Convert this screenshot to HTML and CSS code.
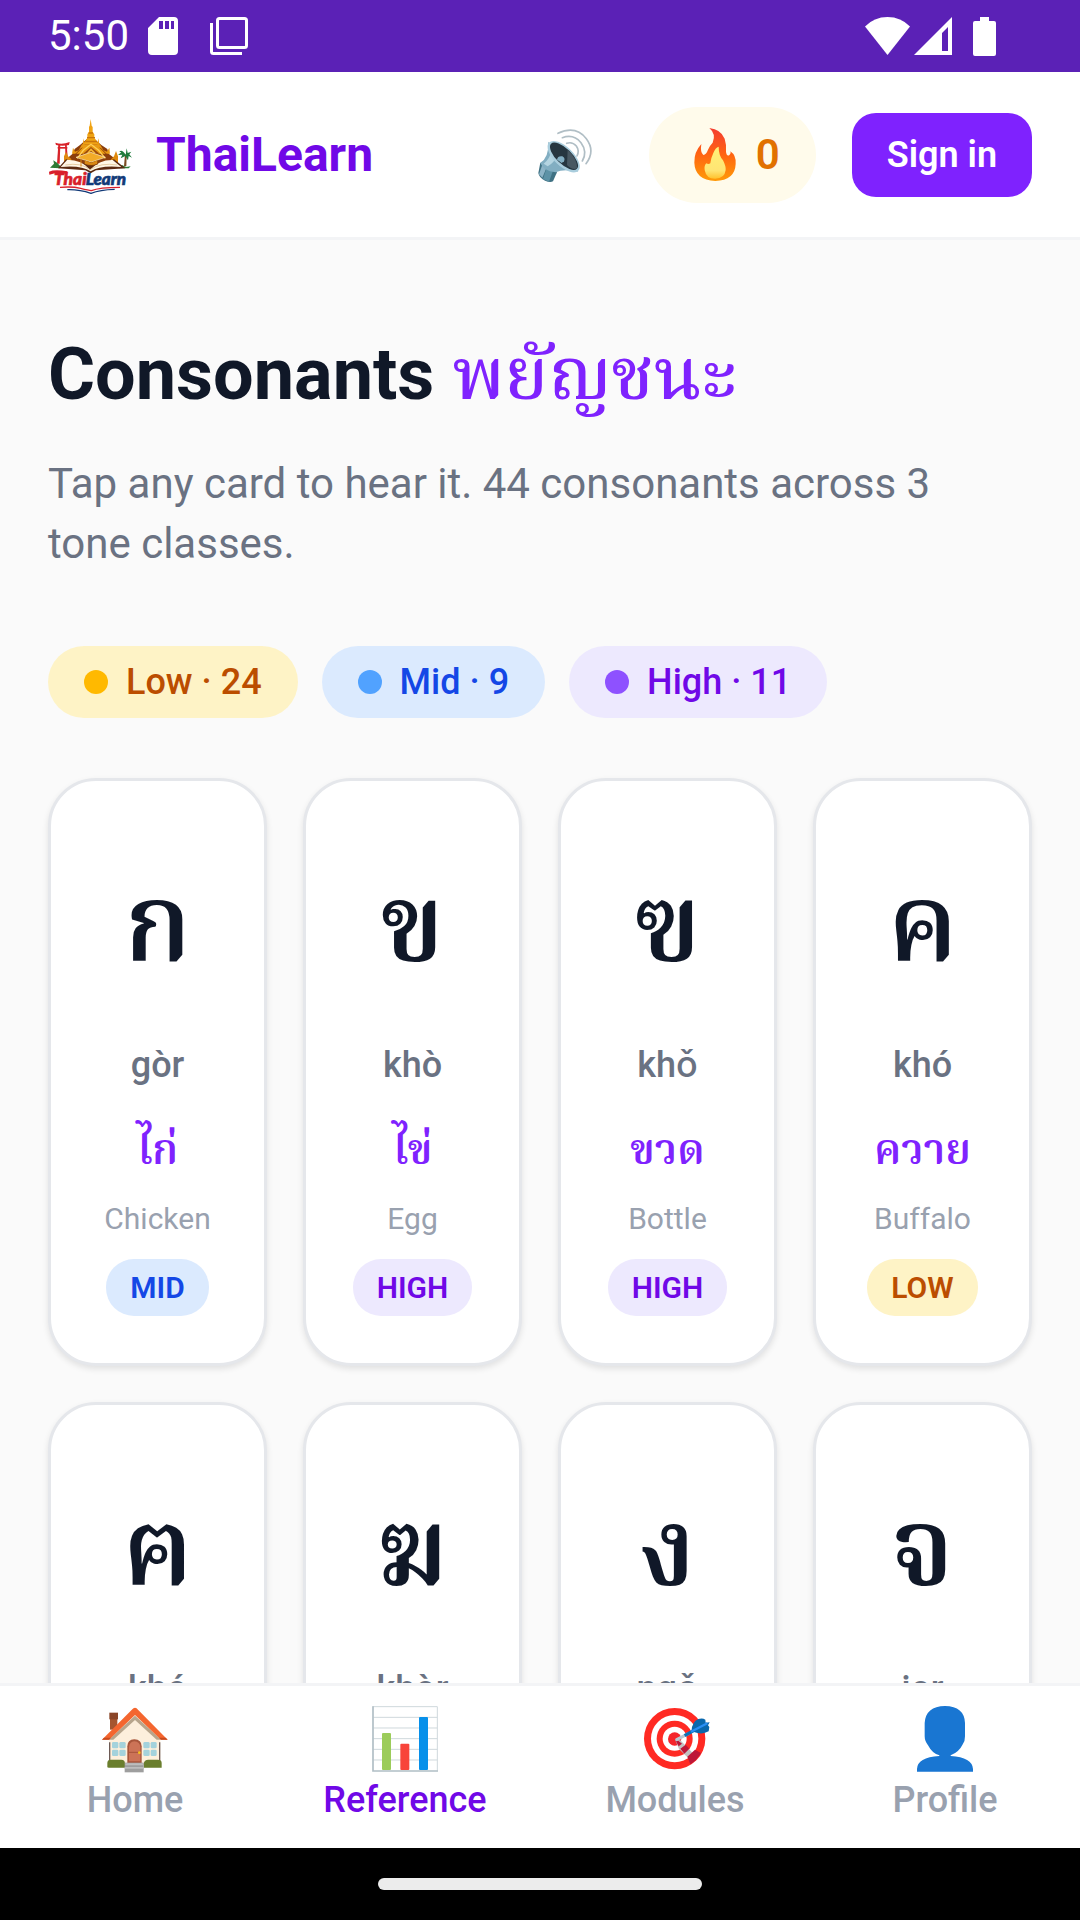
FILE: index.html
```html
<!DOCTYPE html>
<html lang="en">

<head>
  <meta charset="UTF-8">
  <meta name="viewport" content="width=device-width, initial-scale=1.0">
  <title>ThaiLearn - Consonants</title>
  <link rel="stylesheet" href="styles.css">
</head>

<body>
  <div class="status-bar">
    <span class="time">5:50</span>
    <svg class="sd-icon" viewBox="0 0 30 38" width="30" height="38">
      <path fill="#fff" fill-rule="evenodd" d="M11 0H26a4 4 0 0 1 4 4V34a4 4 0 0 1-4 4H4a4 4 0 0 1-4-4V11ZM11 4V12h4V4ZM17 4V12h4V4ZM23 4V12h3V4Z" />
    </svg>
    <svg class="layers-icon" viewBox="0 0 38 38" width="38" height="38" fill="none" stroke="#fff" stroke-width="3">
      <rect x="7.500" y="1.500" width="29" height="29" rx="2" />
      <path d="M1.500 6V34.500a2 2 0 0 0 2 2H32" />
    </svg>
    <div class="status-right">
      <svg viewBox="0 0 45 38" width="45" height="38">
        <path fill="#fff" d="M0 9.500Q9 0 22.500 0T45 9.500L22.500 38Z" />
      </svg>
      <svg viewBox="0 0 38 38" width="38" height="38">
        <path fill="#fff" fill-rule="evenodd" d="M38 0V38H0ZM34 10L28 16V34H34Z" />
      </svg>
      <svg class="battery" viewBox="0 0 23 39" width="23" height="39">
        <path fill="#fff" d="M7 0H16V4H21a2 2 0 0 1 2 2V37a2 2 0 0 1-2 2H2a2 2 0 0 1-2-2V6a2 2 0 0 1 2-2H7Z" />
      </svg>
    </div>
  </div>

  <header class="header">
    <a class="brand" href="#">
      <svg class="logo" viewBox="24 24 252 252">
        <!-- swing gate -->
        <g fill="#d8232a">
          <path d="M46 113Q66 120 89 111L87 120Q67 125 48 120Z" />
          <path d="M53 126H82V131H53Z" />
          <path d="M55 118H61L59 176H51Z" />
          <path d="M75 118H80L84 168H77Z" />
        </g>
        <!-- temple -->
        <path fill="#8b3e0c" d="M82 160L98 146 104 132 120 120 152 92 184 120 202 132 206 146 226 162 220 186H84Z" />
        <path fill="#f0a313" d="M152 42L155 62 158 66 158 80 163 88 163 98 170 108 176 118H128L136 108 142 98 142 88 147 80 147 66 149 62Z" />
        <path fill="#c8740a" d="M146 82H159V86H146ZM141 96H165V100H141ZM136 107H171V112H136Z" />
        <path fill="#e99a12" d="M128 124L130 100 134 122ZM171 122L175 100 179 124ZM96 146L99 128 105 140 116 136 126 118H180L190 136 201 140 208 128 210 146Z" />
        <path fill="none" stroke="#8b3e0c" stroke-width="3" d="M106 148L126 128M200 148L180 128" />
        <path fill="none" stroke="#ffd057" stroke-width="4" d="M112 160L130 136 153 118 176 136 196 160" />
        <path fill="#9c4b0c" d="M132 144L153 126 176 144V158H132Z" />
        <path fill="#f7b733" d="M141 144L153 130 167 144H161L153 137 146 144Z" />
        <path fill="#e08a0e" d="M72 176V154L78 140 84 154 94 162V180H72ZM212 164L222 154 228 138 234 154V180H212Z" />
        <!-- palm and bushes -->
        <path fill="#2d7a35" d="M30 188L42 176 40 166 52 174 60 182V190ZM236 190L246 180 258 186 272 184 266 190Z" />
        <path fill="#7a4b20" d="M255 148L260 150 259 184H252Z" />
        <path fill="#1f7a3a" d="M257 150Q246 132 238 140L244 142 234 150 247 149 242 160 256 153 264 166 266 153 276 158 268 148 274 140 263 144 260 130Z" />
        <!-- book -->
        <path fill="#5b2a10" d="M54 190L78 163 148 180 156 184 222 163 256 190 168 196 152 205 136 196Z" />
        <path fill="#fff7e6" d="M62 186L82 164Q126 164 150 194 178 164 218 165L244 186Q180 180 152 199 124 180 62 186Z" />
        <path fill="none" stroke="#d8b780" stroke-width="2" d="M76 180Q124 172 150 194Q182 172 232 180" />
        <!-- graduation cap -->
        <path fill="#7b3b09" d="M132 160H174V178Q154 189 132 178Z" />
        <path fill="#f2ab28" stroke="#fff1c6" stroke-width="2" d="M108 157L152 142 196 157 154 171Z" />
        <path fill="#d98814" d="M134 166L154 173 172 166V176Q154 184 134 176Z" />
        <path fill="none" stroke="#d98814" stroke-width="3" d="M123 161V185" />
        <!-- word mark -->
        <g font-family="Lato, sans-serif" font-weight="900" font-style="italic" stroke-width="2">
          <text x="42" y="240" font-size="52" fill="#d91f2b" stroke="#d91f2b">Thai</text>
          <text x="137" y="240" font-size="51" fill="#123a78" stroke="#123a78">Learn</text>
        </g>
        <path fill="#d91f2b" d="M27 200Q44 192 82 199L80 206Q48 202 28 209Z" />
        <path fill="none" stroke="#d91f2b" stroke-width="4" d="M60 247Q98 244 122 250T154 257Q178 247 240 247" />
        <path fill="none" stroke="#123a78" stroke-width="4" d="M82 254Q118 253 153 265Q180 254 224 253" />
      </svg>
      <span class="brand-name">ThaiLearn</span>
    </a>
    <button class="sound-btn" aria-label="Sound on">
      <svg viewBox="48 48 168 168" width="56" height="56">
        <g fill="none" stroke="#b0bec5" stroke-width="5" stroke-linecap="round">
          <path d="M137 97Q154 91 166 105Q176 119 168 135" />
          <path d="M124 80Q158 68 180 95Q200 122 184 150" />
          <path d="M111 67Q164 42 196 83Q224 120 195 158" />
        </g>
        <path fill="#3f7183" d="M58 155L108 184 96 211Q88 216 72 209 54 200 52 186Z" />
        <path fill="#8db4c7" d="M66 155L80 162 64 200 54 190Z" />
        <path fill="#5d92a6" d="M80 162L98 174 84 212 66 204Z" />
        <path fill="#82aec2" d="M82 92Q84 140 58 155 66 180 104 184 128 172 172 182Z" />
        <path fill="#b4d4e1" d="M90 120Q88 142 68 158L80 166Q100 154 104 140Z" />
        <ellipse cx="128" cy="137" rx="61" ry="29" transform="rotate(44 128 137)" fill="#a9cddd" />
        <ellipse cx="129" cy="136" rx="54" ry="23" transform="rotate(44 129 136)" fill="#263640" />
        <path fill="#485862" d="M140 116Q170 144 168 172 154 178 138 162Z" />
        <path fill="#82aec2" d="M108 146Q110 134 124 136 134 142 129 151L122 156Z" />
      </svg>
    </button>
    <div class="streak">
      <svg viewBox="519 51 126 165" width="42" height="55">
        <defs>
          <linearGradient id="flame" x1="0" y1="0" x2="0" y2="1">
            <stop offset="0" stop-color="#f43d32" />
            <stop offset=".5" stop-color="#ff6411" />
            <stop offset="1" stop-color="#ff9b08" />
          </linearGradient>
          <linearGradient id="core" x1="0" y1="0" x2="0" y2="1">
            <stop offset="0" stop-color="#fff176" />
            <stop offset=".75" stop-color="#ffe473" />
            <stop offset="1" stop-color="#ffc22e" />
          </linearGradient>
        </defs>
        <path fill="url(#flame)" d="M565 54Q600 58 611 86 617 104 615 126 618 142 626 134 631 130 628 124 646 136 644 162 642 211 583 213 522 210 520 158 519 126 541 102 537 127 547 135 556 133 561 119 566 107 575 98 586 72 565 54Z" />
        <path fill="url(#core)" d="M593 110Q583 113 577 129 569 146 568 160 562 164 556 160 549 166 551 180 556 207 583 206 611 206 614 180 615 169 606 151 593 136 593 110Z" />
      </svg>
      <span>0</span>
    </div>
    <button class="sign-in">Sign in</button>
  </header>

  <main class="content">
    <h1>Consonants <span class="thai" lang="th">พยัญชนะ</span></h1>
    <p class="intro">Tap any card to hear it. 44 consonants across 3 tone classes.</p>

    <div class="legend">
      <span class="chip low"><i class="dot"></i>Low · 24</span>
      <span class="chip mid"><i class="dot"></i>Mid · 9</span>
      <span class="chip high"><i class="dot"></i>High · 11</span>
    </div>

    <div class="grid">
      <button class="card">
        <span class="letter" lang="th">ก</span>
        <span class="roman">gòr</span>
        <span class="word" lang="th">ไก่</span>
        <span class="meaning">Chicken</span>
        <span class="tag mid">MID</span>
      </button>
      <button class="card">
        <span class="letter" lang="th">ข</span>
        <span class="roman">khò</span>
        <span class="word" lang="th">ไข่</span>
        <span class="meaning">Egg</span>
        <span class="tag high">HIGH</span>
      </button>
      <button class="card">
        <span class="letter" lang="th">ฃ</span>
        <span class="roman">khǒ</span>
        <span class="word" lang="th">ขวด</span>
        <span class="meaning">Bottle</span>
        <span class="tag high">HIGH</span>
      </button>
      <button class="card">
        <span class="letter" lang="th">ค</span>
        <span class="roman">khó</span>
        <span class="word" lang="th">ควาย</span>
        <span class="meaning">Buffalo</span>
        <span class="tag low">LOW</span>
      </button>
      <button class="card">
        <span class="letter" lang="th">ฅ</span>
        <span class="roman">khó</span>
      </button>
      <button class="card">
        <span class="letter" lang="th">ฆ</span>
        <span class="roman">khòr</span>
      </button>
      <button class="card">
        <span class="letter" lang="th">ง</span>
        <span class="roman">ngǒ</span>
      </button>
      <button class="card">
        <span class="letter" lang="th">จ</span>
        <span class="roman">jor</span>
      </button>
    </div>
  </main>

  <nav class="tabs">
    <a class="tab" href="#">
      <svg viewBox="66 49 198 198">
        <path fill="#a6562f" d="M90 76H112V120H90Z" />
        <path fill="#8a4527" d="M88 69H114V89H88Z" />
        <path fill="#fdefdc" d="M88 148L165 76 241 148V226H88Z" />
        <path fill="#6d5a55" d="M87 158H91V214H87ZM237 158H241V214H237Z" />
        <path fill="#b7a58c" d="M165 78L86 150H100L165 91 230 150H244Z" />
        <path fill="#f4662f" d="M165 54Q170 54 174 60L263 150H243L165 76 87 150H66L157 59Q160 54 165 54Z" />
        <path fill="#c84a1e" d="M66 150L72 144H93L87 150ZM263 150L257 144H237L243 150Z" />
        <g fill="#a4d2dc">
          <rect x="96" y="157" width="19" height="19" rx="4" />
          <rect x="118" y="157" width="19" height="19" rx="4" />
          <rect x="96" y="180" width="19" height="19" rx="4" />
          <rect x="118" y="180" width="19" height="19" rx="4" />
          <rect x="190" y="157" width="19" height="19" rx="4" />
          <rect x="212" y="157" width="18" height="19" rx="4" />
          <rect x="190" y="180" width="19" height="19" rx="4" />
          <rect x="212" y="180" width="18" height="19" rx="4" />
        </g>
        <path fill="#a8553b" d="M142 220V170Q142 150 163 149Q185 150 185 170V220Z" />
        <path fill="#cc7357" d="M147 215V173Q148 156 163 155Q180 156 181 173V215Z" />
        <path fill="none" stroke="#a8553b" stroke-width="3" d="M147 188H181" />
        <circle cx="178" cy="189" r="4" fill="#f9c21b" />
        <path fill="#6a7e2d" d="M82 233V220Q82 209 94 210H124Q135 210 135 222V234H86ZM191 234V222Q193 210 205 210H233Q245 210 245 220V234Z" />
        <path fill="#9e9e9e" d="M134 219H191V248H134Z" />
        <path fill="#bdbdbd" d="M136 221H189V227H136ZM134 232H191V237H134Z" />
      </svg>
      Home
    </a>
    <a class="tab active" href="#">
      <svg viewBox="876 49 198 198">
        <path fill="#fff" d="M877 50H1073V246H877Z" />
        <path fill="none" stroke="#cfd8dc" stroke-width="3" d="M880 83H1072M880 115H1072M880 147H1072M880 179H1072M880 211H1072M878 51H1072V243" />
        <path fill="none" stroke="#b0bec5" stroke-width="5" d="M879 50V244H1074" />
        <rect x="906" y="130" width="27" height="111" rx="3" fill="#9ccc5a" />
        <rect x="961" y="162" width="27" height="79" rx="3" fill="#f8443a" />
        <rect x="1017" y="82" width="27" height="159" rx="3" fill="#0790ea" />
      </svg>
      Reference
    </a>
    <a class="tab" href="#">
      <svg viewBox="66 49 198 198">
        <circle cx="164" cy="147" r="92" fill="#ff2a23" />
        <circle cx="164" cy="147" r="71" fill="#fff" />
        <circle cx="164" cy="147" r="54" fill="#ff2a23" />
        <circle cx="164" cy="147" r="36" fill="#fff" />
        <circle cx="164" cy="148" r="20" fill="#f5252b" />
        <path fill="#c2c2c2" d="M166 152L181 152 227 199 207 207 177 178Z" />
        <path fill="#bd1738" d="M166 152L176 154 186 162 176 170ZM181 177L197 165 208 177 193 192ZM202 201L225 180 243 190Q231 212 211 224Z" />
        <path fill="none" stroke="#b8c7d1" stroke-width="9" stroke-linecap="round" d="M170 150L205 132" />
        <path fill="none" stroke="#0b6fb5" stroke-width="10" d="M194 138L222 122" />
        <path fill="#0a68ad" d="M215 122Q216 97 235 88Q248 84 256 90L257 99 269 98 264 107 268 112 266 125Q245 138 215 125Z" />
        <path fill="none" stroke="#2a8ff5" stroke-width="7" d="M213 126L262 101" />
      </svg>
      Modules
    </a>
    <a class="tab" href="#">
      <svg viewBox="876 49 198 198">
        <path fill="#1976d2" d="M975 49Q1033 50 1035 100V140Q1036 154 1027 166 1017 187 992 197V199Q1057 203 1059 238V246H891V238Q892 203 958 199V197Q936 190 925 168 914 155 914 140V100Q917 50 975 49Z" />
      </svg>
      Profile
    </a>
  </nav>

  <div class="gesture-bar"><span class="handle"></span></div>
</body>

</html>
```
FILE: styles.css
```css
* {
  box-sizing: border-box;
}

body {
  margin: 0;
  height: 100vh;
  display: flex;
  flex-direction: column;
  overflow: hidden;
  background-color: #fafafa;
  color: #101828;
  font-family: Roboto, Inter, sans-serif;
}

button {
  font-family: inherit;
  border: none;
  padding: 0;
  cursor: pointer;
}

a {
  text-decoration: none;
}

svg {
  display: block;
  overflow: visible;
}

/* status bar */
.status-bar {
  flex: none;
  display: flex;
  align-items: center;
  height: 72px;
  padding: 0 84px 0 48px;
  background-color: #5b21b6;
  color: #fff;
}

.time {
  font-size: 42px;
  line-height: 48px;
}

.sd-icon {
  margin-left: 19px;
}

.layers-icon {
  margin-left: 32px;
}

.status-right {
  display: flex;
  gap: 4px;
  margin-left: auto;
}

.battery {
  margin-left: 17px;
}

/* header */
.header {
  flex: none;
  display: flex;
  align-items: center;
  height: 168px;
  padding: 0 48px;
  background-color: #fff;
  border-bottom: 3px solid #f3f4f6;
}

.brand {
  display: flex;
  align-items: center;
  gap: 24px;
  margin-right: auto;
}

.logo {
  width: 84px;
  height: 84px;
}

.brand-name {
  font-size: 48px;
  font-weight: 700;
  line-height: 60px;
  color: #7008e7;
}

.sound-btn {
  background: none;
  margin-right: 56px;
}

.streak {
  display: flex;
  align-items: center;
  gap: 20px;
  height: 96px;
  padding: 0 36px 0 45px;
  border-radius: 48px;
  background-color: #fffbeb;
  color: #e17100;
  font-size: 42px;
  font-weight: 600;
}

.sign-in {
  height: 84px;
  margin-left: 36px;
  padding: 0 35px;
  border-radius: 24px;
  background-color: #7f22fe;
  color: #fff;
  font-size: 36px;
  font-weight: 600;
}

/* page content */
.content {
  flex: 1;
  min-height: 0;
  overflow: hidden;
  padding: 84px 48px 0;
}

h1 {
  margin: 0 0 28px;
  font-size: 72px;
  font-weight: 700;
  line-height: 102px;
}

.thai,
.letter,
.word {
  font-family: "Noto Serif Thai", Norasi, Kinnari, "Noto Sans Thai", serif;
}

.thai {
  color: #7f22fe;
  font-weight: 500;
  line-height: 1;
}

.intro {
  max-width: 960px;
  margin: 0 0 72px;
  font-size: 42px;
  line-height: 60px;
  color: #6a7282;
}

.legend {
  display: flex;
  gap: 24px;
  margin-bottom: 60px;
}

.chip {
  display: flex;
  align-items: center;
  gap: 18px;
  height: 72px;
  padding: 0 36px;
  border-radius: 36px;
  font-size: 36px;
  font-weight: 500;
}

.dot {
  width: 24px;
  height: 24px;
  border-radius: 50%;
}

.low {
  background-color: #fef3c6;
  color: #bb4d00;
}

.mid {
  background-color: #dbeafe;
  color: #1447e6;
}

.high {
  background-color: #ede9fe;
  color: #7008e7;
}

.low .dot {
  background-color: #ffb900;
}

.mid .dot {
  background-color: #51a2ff;
}

.high .dot {
  background-color: #8e51ff;
}

/* consonant cards */
.grid {
  display: grid;
  grid-template-columns: repeat(4, 1fr);
  grid-auto-rows: 588px;
  gap: 36px;
}

.card {
  display: flex;
  flex-direction: column;
  align-items: center;
  padding: 52px 12px 48px;
  border: 3px solid #e5e7eb;
  border-radius: 48px;
  background-color: #fff;
  box-shadow: 0 3px 6px rgba(0, 0, 0, 0.1);
}

.letter {
  margin-bottom: 8px;
  font-size: 108px;
  font-weight: 600;
  line-height: 200px;
  color: #101828;
}

.roman {
  margin-bottom: 28px;
  font-size: 36px;
  font-weight: 500;
  line-height: 48px;
  color: #6a7282;
}

.word {
  margin-bottom: 12px;
  font-size: 42px;
  font-weight: 600;
  line-height: 72px;
  color: #7f22fe;
}

.meaning {
  margin-bottom: 22px;
  font-size: 30px;
  line-height: 36px;
  color: #99a1af;
}

.tag {
  padding: 0 24px;
  border-radius: 28px;
  font-size: 30px;
  font-weight: 600;
  line-height: 57px;
}

/* bottom navigation */
.tabs {
  flex: none;
  display: flex;
  padding: 20px 0 24px;
  background-color: #fff;
  border-top: 3px solid #f3f4f6;
}

.tab {
  flex: 1;
  display: flex;
  flex-direction: column;
  align-items: center;
  gap: 4px;
  font-size: 36px;
  font-weight: 500;
  line-height: 48px;
  color: #99a1af;
}

.tab svg {
  width: 66px;
  height: 66px;
}

.tab.active {
  color: #7008e7;
}

.gesture-bar {
  flex: none;
  display: flex;
  align-items: center;
  justify-content: center;
  height: 72px;
  background-color: #000;
}

.handle {
  width: 324px;
  height: 12px;
  border-radius: 6px;
  background-color: #ececec;
}
```
